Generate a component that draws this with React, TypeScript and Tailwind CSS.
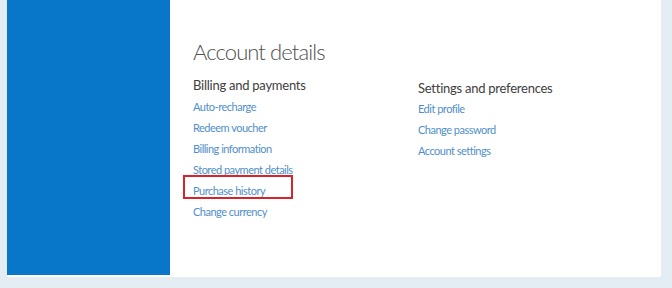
import React from 'react';

const billingLinks = [
  'Auto-recharge',
  'Redeem voucher',
  'Billing information',
  'Stored payment details',
  'Purchase history',
  'Change currency',
];

const settingsLinks = ['Edit profile', 'Change password', 'Account settings'];

const LinkItem: React.FC<{ label: string; boxed?: boolean }> = ({ label, boxed }) => (
  <li className="relative h-[21px] leading-[21px]">
    <a className="text-[11px] tracking-[-0.5px] text-[#4f8fcb] whitespace-nowrap">{label}</a>
    {boxed && (
      <span className="absolute left-[-10px] top-[-3px] w-[110px] h-[24px] border-2 border-[#d9232a]" />
    )}
  </li>
);

export default function App() {
  return (
    <div
      className="w-[672px] h-[288px] bg-[#e4edf4] overflow-hidden pl-[7px]"
      style={{ fontFamily: 'Lato, "Open Sans", sans-serif' }}
    >
      <div className="flex w-[654px] h-[277px] bg-white">
        {/* Blue sidebar */}
        <div className="w-[163px] h-[275px] bg-[#0876c9] shrink-0" />

        {/* Content */}
        <div className="flex-1 pl-[23px] pt-[38px]">
          <h1 className="text-[22px] tracking-[-0.9px] font-light leading-[28px] text-[#505050]">
            Account details
          </h1>
          <div className="flex mt-[10px]">
            <section className="w-[225px]">
              <h2 className="text-[13px] tracking-[-0.25px] leading-[18px] text-[#404040]">
                Billing and payments
              </h2>
              <ul>
                {billingLinks.map((l) => (
                  <LinkItem key={l} label={l} boxed={l === 'Purchase history'} />
                ))}
              </ul>
            </section>
            <section className="mt-[3px]">
              <h2 className="text-[13px] tracking-[-0.25px] leading-[18px] text-[#404040]">
                Settings and preferences
              </h2>
              <ul className="-mt-[1px]">
                {settingsLinks.map((l) => (
                  <LinkItem key={l} label={l} />
                ))}
              </ul>
            </section>
          </div>
        </div>
      </div>
    </div>
  );
}
